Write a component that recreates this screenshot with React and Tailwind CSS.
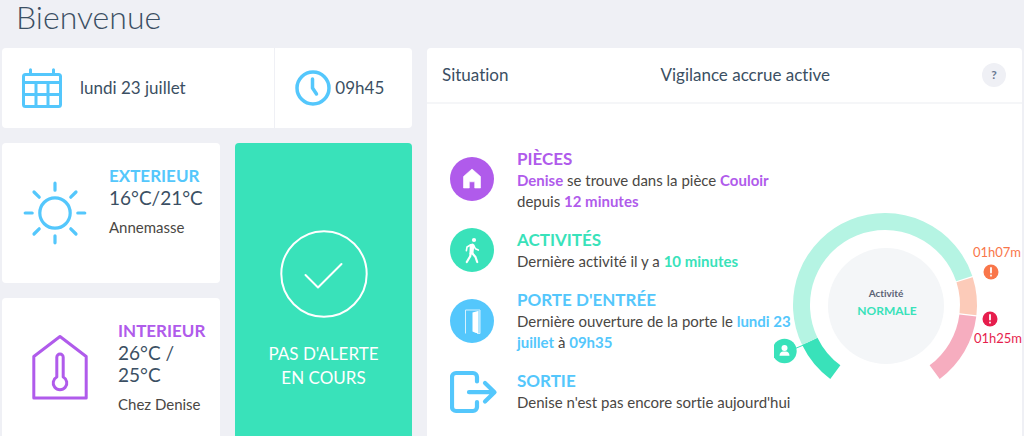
import React from 'react';

const CalendarIcon = () => (
  <svg className="h-10 w-10 shrink-0" viewBox="0 0 40 40" fill="none" stroke="#54c7fc" strokeWidth="3" aria-hidden="true">
    <rect x="1.5" y="6.5" width="37" height="32" rx="2" />
    <path d="M2 14.500h36M2 26.500h36M14 15v23M26 15v23" />
    <path d="M8.500 1.800v4M31.500 1.800v4" strokeLinecap="round" />
  </svg>
);

const ClockIcon = () => (
  <svg className="h-9 w-9 shrink-0" viewBox="0 0 36 36" fill="none" stroke="#54c7fc" strokeWidth="3.500" strokeLinecap="round" strokeLinejoin="round" aria-hidden="true">
    <circle cx="18" cy="18" r="16" />
    <path d="M17.500 9v9l4 6" />
  </svg>
);

const SunIcon = () => (
  <svg className="h-16 w-16" viewBox="0 0 64 64" fill="none" stroke="#54c7fc" strokeWidth="3.200" strokeLinecap="round" aria-hidden="true">
    <circle cx="32" cy="32" r="15.200" />
    <path d="M32 2.200v7M32 54.800v7M2.200 32h7M54.800 32h7M11 11l5.200 5.200M47.800 47.800l5.200 5.200M11 53l5.200-5.200M47.800 16.200l5.200-5.200" />
  </svg>
);

const HomeTempIcon = () => (
  <svg className="h-[66px] w-14" viewBox="0 0 56 66" fill="none" stroke="#b05beb" strokeWidth="3" strokeLinejoin="round" aria-hidden="true">
    <path d="M1.800 22.500L28 2.500l26.200 20v41.500H1.800z" />
    <path d="M24.800 43V23.200a3.200 3.200 0 0 1 6.400 0V43a6.800 6.800 0 1 1-6.400 0z" />
  </svg>
);

const CheckIcon = () => (
  <svg className="h-22 w-22" viewBox="0 0 88 88" fill="none" stroke="#fff" strokeWidth="2" strokeLinecap="round" strokeLinejoin="round" aria-hidden="true">
    <circle cx="44" cy="44" r="42.700" />
    <path d="M25.500 45l12.500 12.500L61.500 34" />
  </svg>
);

const HouseBadge = () => (
  <svg className="h-11 w-11" viewBox="0 0 44 44" aria-hidden="true">
    <circle cx="22" cy="22" r="22" fill="#b05beb" />
    <path d="M22 12l8.500 7.500V31h-5.800v-6.200h-5.400V31h-5.800V19.500z" fill="#fff" stroke="#fff" strokeWidth=".6" strokeLinejoin="round" />
  </svg>
);

const WalkBadge = () => (
  <svg className="h-11 w-11" viewBox="0 0 44 44" aria-hidden="true">
    <circle cx="22" cy="22" r="22" fill="#39e2ba" />
    <circle cx="24" cy="12" r="2.100" fill="#fff" />
    <path d="M20.800 25l-.6 3.200-3.400 5.800M22.500 25.500l3 3.500 1.700 5" fill="none" stroke="#fff" strokeWidth="2.200" strokeLinecap="round" strokeLinejoin="round" />
    <path d="M19.800 16.200l3-.6 1.600 1.200-1 8.900-4 .5z" fill="#fff" />
    <path d="M20.500 17l-3.500 2-.6 3.600M23.800 17.500l1.700 3.300 2.800 1.300" fill="none" stroke="#fff" strokeWidth="1.600" strokeLinecap="round" strokeLinejoin="round" />
  </svg>
);

const DoorBadge = () => (
  <svg className="h-11 w-11" viewBox="0 0 44 44" aria-hidden="true">
    <circle cx="22" cy="22" r="22" fill="#54c7fc" />
    <path d="M15.500 34.500V11h14.500v23.500h-3" fill="none" stroke="#d5f1ff" strokeWidth="1" />
    <path d="M22.500 13.500l5.500-1.500v22h-2l-3.500-1.500z" fill="#fff" />
    <path d="M28 12h2v22h-2z" fill="#b5e7fe" />
  </svg>
);

const ExitIcon = () => (
  <svg className="h-11 w-12" viewBox="0 0 48 44" fill="none" stroke="#54c7fc" strokeWidth="4.200" strokeLinecap="round" strokeLinejoin="round" aria-hidden="true">
    <path d="M27 11.500V7a4 4 0 0 0-4-4H6a4 4 0 0 0-4 4v30a4 4 0 0 0 4 4h17a4 4 0 0 0 4-4v-5" />
    <path d="M19 22.200h25M35 13l9.500 9.200L35 31.500" />
  </svg>
);

const CENTER = { x: 111, y: 99 };

// angles in degrees, clockwise from 3 o'clock
const SEGMENTS = [
  { from: 126.5, to: 154.2, color: '#39e2ba' },
  { from: 154.2, to: 341.6, color: '#b5f4e3' },
  { from: 342.4, to: 366.4, color: '#fccbb9' },
  { from: 367.2, to: 413.5, color: '#f6adbf' },
];

const arc = (from, to, r) => {
  const point = (deg) => {
    const a = (deg * Math.PI) / 180;
    return `${CENTER.x + r * Math.cos(a)} ${CENTER.y + r * Math.sin(a)}`;
  };
  return `M${point(from)}A${r} ${r} 0 ${to - from > 180 ? 1 : 0} 1 ${point(to)}`;
};

const Warning = ({ x, y, color }) => (
  <g>
    <circle cx={x} cy={y} r="7.500" fill={color} />
    <path d={`M${x} ${y - 4}v4.500M${x} ${y + 3.5}v.2`} stroke="#fff" strokeWidth="1.800" strokeLinecap="round" />
  </g>
);

const ActivityGauge = () => (
  <svg className="h-[180px] w-[248px] shrink-0" viewBox="0 0 248 180" role="img" aria-label="Activité normale">
    {SEGMENTS.map((s) => (
      <path key={s.from} d={arc(s.from, s.to, 83.5)} fill="none" stroke={s.color} strokeWidth="17" />
    ))}
    <circle cx="112" cy="100" r="58" fill="#f4f6f8" />
    <text x="112" y="91" textAnchor="middle" className="fill-[#5b6275] text-[10px] font-bold">Activité</text>
    <text x="113" y="109" textAnchor="middle" className="fill-[#39e2ba] text-[12px] font-bold">NORMALE</text>

    <path d="M20 143l12-5" stroke="#39e2ba" strokeWidth="1" />
    <circle cx="10.500" cy="145" r="12.200" fill="#39e2ba" />
    <circle cx="10.500" cy="142" r="3" fill="#fff" />
    <path d="M5.500 149.800c0-3 2-4 3.500-4.200h3c1.500.2 3.500 1.200 3.500 4.200z" fill="#fff" />

    <text x="247" y="51" textAnchor="end" className="fill-[#f9764a] text-[13px]">01h07m</text>
    <Warning x={217} y={66} color="#f9764a" />
    <Warning x={216} y={113} color="#e61e4d" />
    <text x="248" y="137" textAnchor="end" className="fill-[#e61e4d] text-[13px]">01h25m</text>
  </svg>
);

const WeatherCard = ({ icon, title, color, temp, place, className }) => (
  <section className={`flex rounded bg-white pr-3 ${className}`}>
    {icon}
    <div className="min-w-0 pt-[22px]">
      <h2 className={`text-[17px] leading-[22px] font-bold ${color}`}>{title}</h2>
      <p className="text-[19px] leading-[22px] text-[#3b4f63]">{temp}</p>
      <p className="mt-2 text-[15px] leading-[21px] text-[#4a4744]">{place}</p>
    </div>
  </section>
);

const Status = ({ title, color, children }) => (
  <div>
    <h3 className={`text-[17px] leading-[22px] font-bold ${color}`}>{title}</h3>
    <p className="text-[15px] leading-[21px]">{children}</p>
  </div>
);

const App = () => {
  return (
    <main className="flex h-screen flex-col overflow-hidden bg-[#eff0f5] px-0.5 font-['Lato',sans-serif] text-[#3b4f63] [font-variant-ligatures:none]">
      <h1 className="h-12 shrink-0 pl-[14px] text-[32px] leading-[34px] font-light">Bienvenue</h1>

      <div className="grid min-h-0 flex-1 grid-cols-[82fr_119fr] gap-[15px]">
        {/* Left column */}
        <div className="flex min-h-0 flex-col gap-[15px]">
          <section className="flex h-20 shrink-0 rounded bg-white">
            <div className="flex flex-1 items-center gap-[18px] border-r border-[#eff0f5] pl-5 text-[17px]">
              <CalendarIcon />
              <time>lundi 23 juillet</time>
            </div>
            <div className="flex w-1/3 items-center gap-1 pl-5 text-[17px]">
              <ClockIcon />
              <time>09h45</time>
            </div>
          </section>

          <div className="grid min-h-0 flex-1 grid-cols-[218fr_177fr] gap-[15px]">
            <div className="flex min-h-0 flex-col gap-[15px]">
              <WeatherCard
                className="h-[140px] shrink-0"
                icon={<div className="mr-[22px] ml-[21px] shrink-0 pt-[38px]"><SunIcon /></div>}
                title="EXTERIEUR"
                color="text-[#54c7fc]"
                temp="16°C/21°C"
                place="Annemasse"
              />
              <WeatherCard
                className="flex-1 rounded-b-none"
                icon={<div className="mr-[30px] ml-[30px] shrink-0 pt-9"><HomeTempIcon /></div>}
                title="INTERIEUR"
                color="text-[#b05beb]"
                temp="26°C / 25°C"
                place="Chez Denise"
              />
            </div>

            <section className="flex flex-col items-center rounded rounded-b-none bg-[#39e2ba] pt-[87px] text-white">
              <CheckIcon />
              <p className="mt-6 w-32 text-center text-[17px] leading-6">PAS D'ALERTE EN COURS</p>
            </section>
          </div>
        </div>

        {/* Situation */}
        <section className="flex min-h-0 flex-col rounded rounded-b-none bg-white">
          <header className="flex h-14 shrink-0 items-center justify-between border-b-2 border-[#f5f6f8] pr-4 pl-[15px] text-[17px]">
            <h2>Situation</h2>
            <p>Vigilance accrue active</p>
            <button type="button" aria-label="Aide" className="h-6 w-6 rounded-full bg-[#eff0f5] text-[12px] font-bold text-[#6b7891]">
              ?
            </button>
          </header>

          <div className="flex flex-1 pl-[23px]">
            <div className="mr-[19px] flex w-12 shrink-0 flex-col gap-[27px] pt-[53px]">
              <HouseBadge />
              <WalkBadge />
              <DoorBadge />
              <ExitIcon />
            </div>
            <div className="flex min-w-0 flex-1 flex-col gap-[17px] pt-11 text-[#4a4744]">
              <Status title="PIÈCES" color="text-[#b05beb]">
                <b className="text-[#b05beb]">Denise</b> se trouve dans la pièce <b className="text-[#b05beb]">Couloir</b> depuis{' '}
                <b className="text-[#b05beb]">12 minutes</b>
              </Status>
              <Status title="ACTIVITÉS" color="text-[#39e2ba]">
                Dernière activité il y a <b className="text-[#39e2ba]">10 minutes</b>
              </Status>
              <Status title="PORTE D'ENTRÉE" color="text-[#54c7fc]">
                Dernière ouverture de la porte le <b className="text-[#54c7fc]">lundi 23 juillet</b> à{' '}
                <b className="text-[#54c7fc]">09h35</b>
              </Status>
              <Status title="SORTIE" color="text-[#54c7fc]">
                Denise n'est pas encore sortie aujourd'hui
              </Status>
            </div>
            {/* the gauge's left marker reaches under the end of the text column */}
            <div className="-ml-6 shrink-0 pt-[102px]">
              <ActivityGauge />
            </div>
          </div>
        </section>
      </div>
    </main>
  );
};

export default App;
